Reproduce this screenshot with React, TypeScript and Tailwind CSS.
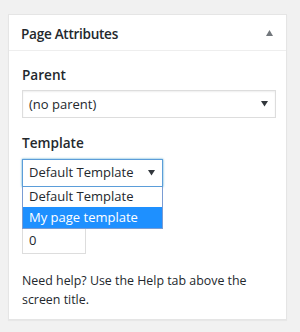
import React from 'react'

function Caret({ up = false, className = '' }: { up?: boolean; className?: string }) {
  return (
    <svg width="7" height="6" viewBox="0 0 7 6" className={className}>
      {up ? <path d="M3.5 0 L7 6 L0 6 Z" fill="currentColor" /> : <path d="M0 0 L7 0 L3.5 5.5 Z" fill="currentColor" />}
    </svg>
  )
}

export default function App() {
  return (
    <div
      className="w-[300px] h-[332px] bg-[#f1f1f1] pt-[14px] pl-[8px] text-[#23282d]"
      style={{ fontFamily: '"Open Sans", "Noto Sans", sans-serif' }}
    >
      <div className="w-[279px] h-[306px] bg-white border border-[#e5e5e5] shadow-[0_1px_1px_rgba(0,0,0,0.04)]">
        {/* header */}
        <div className="h-[36px] border-b border-[#eeeeee] flex items-center justify-between pl-[12px] pr-[13px]">
          <h2 className="text-[13.6px] font-semibold tracking-[-0.3px] mt-[3px]">Page Attributes</h2>
          <Caret up className="text-[#72777c] mt-[1px]" />
        </div>

        {/* body */}
        <div className="px-[13px] pt-[14px]">
          <p className="text-[13.6px] font-semibold leading-[20px] mb-[5px]">Parent</p>
          <div className="h-[28px] w-[254px] border border-[#dddddd] shadow-[inset_0_1px_2px_rgba(0,0,0,0.07)] flex items-center justify-between pl-[6px] pr-[7px]">
            <span className="text-[13px] mt-[1px]">(no parent)</span>
            <Caret className="text-[#32373c]" />
          </div>

          <p className="text-[13.6px] font-semibold leading-[20px] mt-[15px] mb-[6px]">Template</p>
          <div className="relative w-[141px]">
            <div className="h-[28px] w-[141px] border border-[#5b9dd9] shadow-[0_0_2px_rgba(30,140,190,0.8)] flex items-center justify-between pl-[6px] pr-[7px]">
              <span className="text-[13px]">Default Template</span>
              <Caret className="text-[#32373c]" />
            </div>

            {/* open option list */}
            <div className="absolute left-0 top-[28px] w-[141px] bg-white border border-t-0 border-[#7a9cd3] z-10">
              <div className="h-[20px] flex items-center pl-[6px] text-[13px]">Default Template</div>
              <div className="h-[21px] flex items-center pl-[6px] text-[13px] bg-[#1e90ff] text-white">My page template</div>
            </div>
          </div>

          <div className="h-[26px] w-[64px] border border-[#dddddd] flex items-center pl-[6px] text-[13px] mt-[41px]">0</div>

          <p className="text-[12.4px] leading-[19px] mt-[17px]">Need help? Use the Help tab above the screen title.</p>
        </div>
      </div>
    </div>
  )
}
